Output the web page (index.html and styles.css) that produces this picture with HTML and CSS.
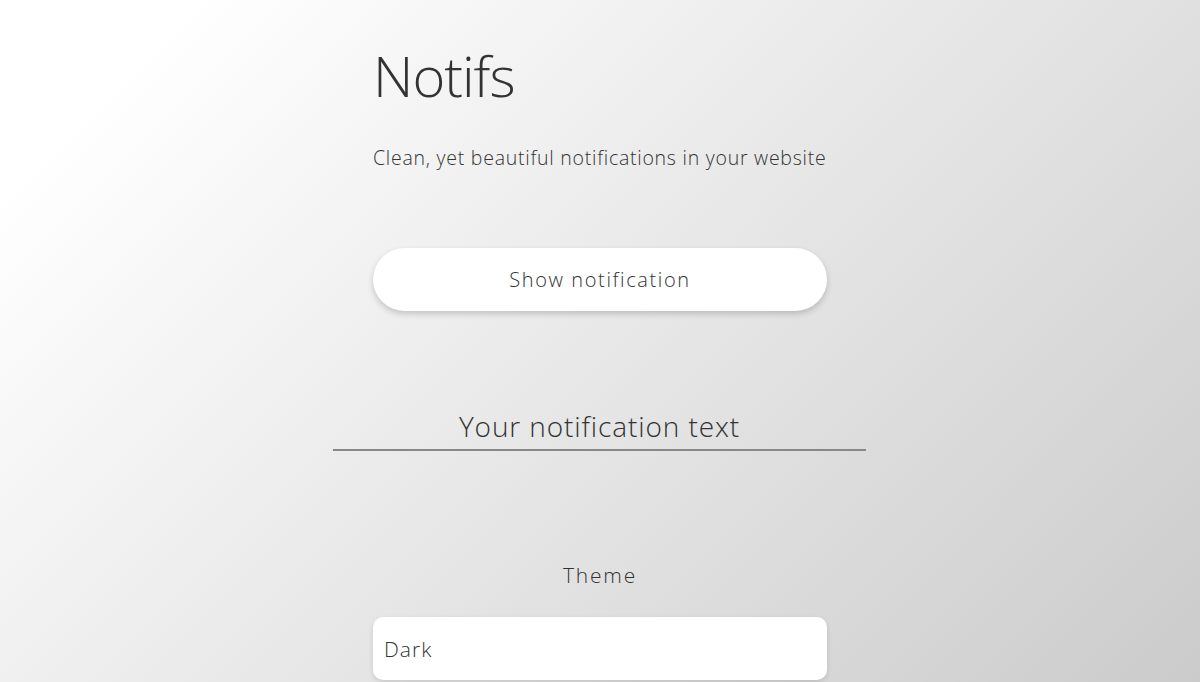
FILE: index.html
```html
<!DOCTYPE html>
<html lang="en">
<head>
<meta charset="utf-8">
<title>Notifs</title>
<link rel="stylesheet" href="styles.css">
</head>
<body>
<main class="page">
  <h1 class="title">Notifs</h1>
  <p class="subtitle">Clean, yet beautiful notifications in your website</p>
  <button class="show-btn" type="button">Show notification</button>
  <input class="notif-input" type="text" placeholder="Your notification text">
  <label class="theme-label" for="theme">Theme</label>
  <div class="select" id="theme">Dark</div>
</main>
</body>
</html>
```

FILE: styles.css
```css
html, body {
  margin: 0;
  padding: 0;
  height: 100%;
}
body {
  background: linear-gradient(135deg, #ffffff 10%, #cbcbcb 100%);
  font-family: "Open Sans", "Liberation Sans", sans-serif;
  font-weight: 300;
  color: #333333;
  overflow: hidden;
}
.page {
  width: 454px;
  margin: 0 auto;
  display: flex;
  flex-direction: column;
  align-items: stretch;
}
.title {
  margin: 45px 0 0;
  font-size: 56px;
  line-height: 60px;
  letter-spacing: -1px;
  font-weight: 300;
  color: #333;
}
.subtitle {
  margin: 41px 0 0;
  font-size: 19.5px;
  line-height: 24px;
  letter-spacing: 0.75px;
  color: #333;
}
.show-btn {
  margin-top: 78px;
  height: 63px;
  border: none;
  border-radius: 32px;
  background: #fff;
  box-shadow: 0 3px 6px rgba(0,0,0,0.18);
  font-family: inherit;
  font-weight: 300;
  font-size: 20px;
  letter-spacing: 1.6px;
  color: #333;
  padding: 0;
}
.notif-input {
  margin: 98px -40px 0;
  width: 533px;
  box-sizing: border-box;
  border: none;
  border-bottom: 2px solid #888;
  background: transparent;
  font-family: inherit;
  font-weight: 300;
  font-size: 28px;
  letter-spacing: 0.9px;
  line-height: 34px;
  height: 42px;
  padding: 0 0 6px;
  text-align: center;
  color: #333;
  outline: none;
}
.notif-input::placeholder {
  color: #333;
  opacity: 1;
}
.theme-label {
  margin-top: 111px;
  text-align: center;
  font-size: 21px;
  letter-spacing: 1.8px;
  line-height: 26px;
}
.select {
  margin-top: 29px;
  height: 63px;
  box-sizing: border-box;
  background: #fff;
  border-radius: 10px;
  box-shadow: 0 2px 5px rgba(0,0,0,0.12);
  padding: 0 11px;
  display: flex;
  align-items: center;
  font-size: 21px;
  letter-spacing: 1px;
}
```
